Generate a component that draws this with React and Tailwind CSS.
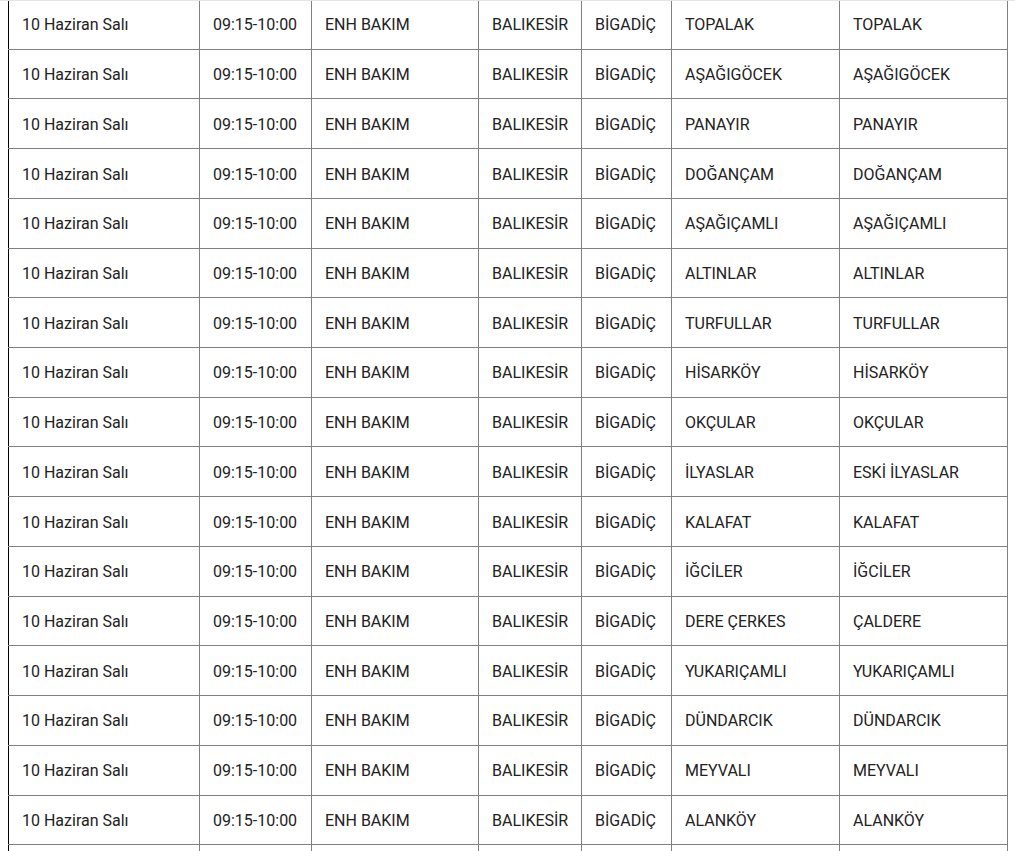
import React from "react";

const rows = [
  ["TOPALAK", "TOPALAK"],
  ["AŞAĞIGÖCEK", "AŞAĞIGÖCEK"],
  ["PANAYIR", "PANAYIR"],
  ["DOĞANÇAM", "DOĞANÇAM"],
  ["AŞAĞIÇAMLI", "AŞAĞIÇAMLI"],
  ["ALTINLAR", "ALTINLAR"],
  ["TURFULLAR", "TURFULLAR"],
  ["HİSARKÖY", "HİSARKÖY"],
  ["OKÇULAR", "OKÇULAR"],
  ["İLYASLAR", "ESKİ İLYASLAR"],
  ["KALAFAT", "KALAFAT"],
  ["İĞCİLER", "İĞCİLER"],
  ["DERE ÇERKES", "ÇALDERE"],
  ["YUKARIÇAMLI", "YUKARIÇAMLI"],
  ["DÜNDARCIK", "DÜNDARCIK"],
  ["MEYVALI", "MEYVALI"],
  ["ALANKÖY", "ALANKÖY"],
  ["ÇAMKÖY", "ÇAMKÖY"],
];

const Cell = ({ children, first }) => (
  <div
    className={`flex items-center pl-[13px] pt-[2px] border-r border-[#808080] overflow-hidden whitespace-nowrap ${
      first ? "border-l border-l-black" : ""
    }`}
  >
    {children}
  </div>
);

const App = () => {
  return (
    <div
      className="min-h-screen bg-white border-t border-[#e4e4e4] overflow-hidden text-[16px] text-[#222]"
      style={{ fontFamily: "Roboto, 'Liberation Sans', sans-serif" }}
    >
      <div className="ml-[8px] w-[1000px] -mt-[1px]">
        {rows.map(([mah, sokak], i) => (
          <div
            key={i}
            className="grid grid-cols-[192px_112px_167px_103px_90px_168px_168px] h-[49.72px] border-b border-[#808080]"
          >
            <Cell first>10 Haziran Salı</Cell>
            <Cell>09:15-10:00</Cell>
            <Cell>ENH BAKIM</Cell>
            <Cell>BALIKESİR</Cell>
            <Cell>BİGADİÇ</Cell>
            <Cell>{mah}</Cell>
            <Cell>{sokak}</Cell>
          </div>
        ))}
      </div>
    </div>
  );
};

export default App;
